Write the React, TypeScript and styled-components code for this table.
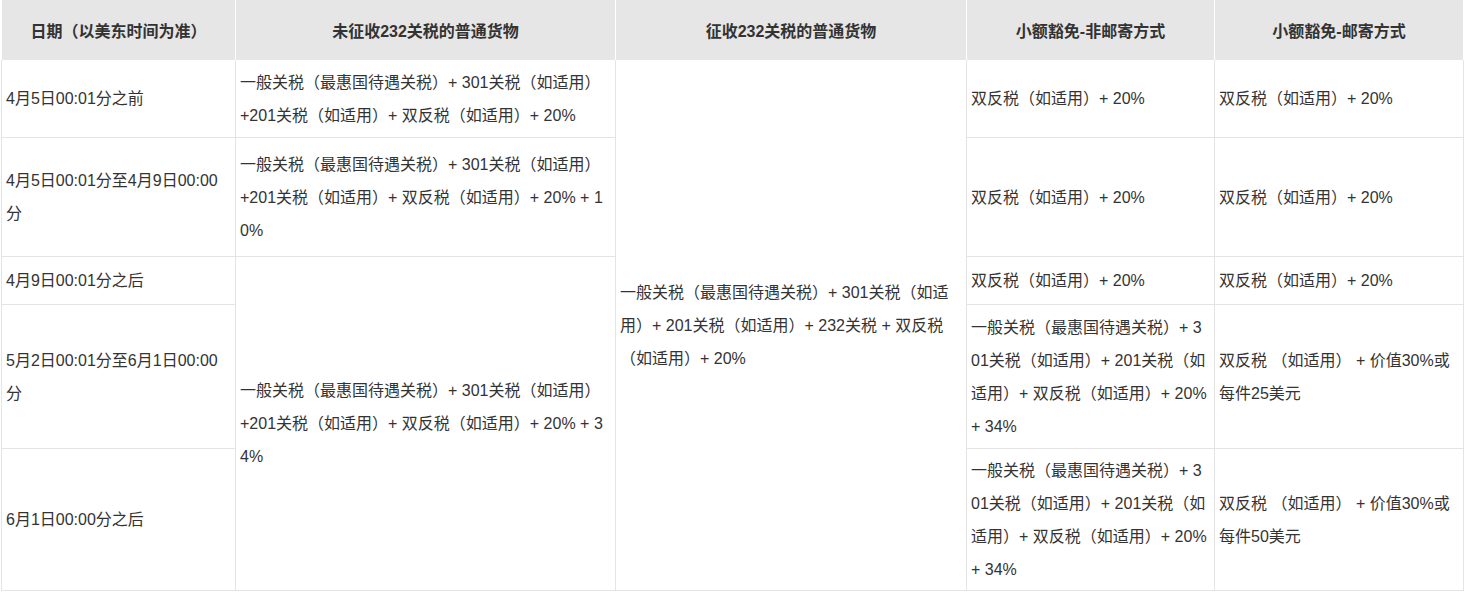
import React from "react";
import styled, { createGlobalStyle } from "styled-components";

const GlobalStyle = createGlobalStyle`
  html, body {
    margin: 0;
    padding: 0;
    background: #ffffff;
  }
  body {
    font-family: "Liberation Sans", "Noto Sans CJK SC", Arial, sans-serif;
  }
`;

const Table = styled.div`
  display: grid;
  margin-left: 1px;
  width: 1463px;
  grid-template-columns: 235px 380px 351px 248px 249px;
  grid-template-rows: 60px 78px 119px 48px 144px 142px;
  font-family: "Liberation Sans", "Noto Sans CJK SC", sans-serif;
`;

const HeadCell = styled.div<{ $first?: boolean }>`
  box-sizing: border-box;
  display: flex;
  align-items: center;
  justify-content: center;
  background: #e6e6e6;
  border-right: 1px solid #ffffff;
  border-left: ${(p) => (p.$first ? "1px solid #ffffff" : "none")};
  color: #333333;
  font-size: 16px;
  font-weight: 700;
  white-space: nowrap;
`;

const Cell = styled.div<{ $col: number; $row: number; $span?: number }>`
  box-sizing: border-box;
  grid-column: ${(p) => p.$col};
  grid-row: ${(p) => p.$row} / span ${(p) => p.$span ?? 1};
  display: flex;
  flex-direction: column;
  justify-content: center;
  padding: 0 4px;
  border-right: 1px solid #e4e4e4;
  border-bottom: 1px solid #e4e4e4;
  border-left: ${(p) => (p.$col === 1 ? "1px solid #e4e4e4" : "none")};
  color: #333333;
  font-size: 16px;
  overflow: hidden;
`;

const Line = styled.div`
  line-height: 33px;
  height: 33px;
  white-space: pre;
`;

type CellData = { col: number; row: number; span?: number; lines: string[] };

const headers = [
  "日期（以美东时间为准）",
  "未征收232关税的普通货物",
  "征收232关税的普通货物",
  "小额豁免-非邮寄方式",
  "小额豁免-邮寄方式",
];

const dual = "双反税（如适用）+ 20%";
const general4 = [
  "一般关税（最惠国待遇关税）+ 3",
  "01关税（如适用）+ 201关税（如",
  "适用）+ 双反税（如适用）+ 20%",
  "+ 34%",
];

const cells: CellData[] = [
  { col: 1, row: 2, lines: ["4月5日00:01分之前"] },
  {
    col: 2,
    row: 2,
    lines: ["一般关税（最惠国待遇关税）+ 301关税（如适用）", "+201关税（如适用）+ 双反税（如适用）+ 20%"],
  },
  {
    col: 3,
    row: 2,
    span: 5,
    lines: [
      "一般关税（最惠国待遇关税）+ 301关税（如适",
      "用）+ 201关税（如适用）+ 232关税 + 双反税",
      "（如适用）+ 20%",
    ],
  },
  { col: 4, row: 2, lines: [dual] },
  { col: 5, row: 2, lines: [dual] },

  { col: 1, row: 3, lines: ["4月5日00:01分至4月9日00:00", "分"] },
  {
    col: 2,
    row: 3,
    lines: [
      "一般关税（最惠国待遇关税）+ 301关税（如适用）",
      "+201关税（如适用）+ 双反税（如适用）+ 20% + 1",
      "0%",
    ],
  },
  { col: 4, row: 3, lines: [dual] },
  { col: 5, row: 3, lines: [dual] },

  { col: 1, row: 4, lines: ["4月9日00:01分之后"] },
  {
    col: 2,
    row: 4,
    span: 3,
    lines: [
      "一般关税（最惠国待遇关税）+ 301关税（如适用）",
      "+201关税（如适用）+ 双反税（如适用）+ 20% + 3",
      "4%",
    ],
  },
  { col: 4, row: 4, lines: [dual] },
  { col: 5, row: 4, lines: [dual] },

  { col: 1, row: 5, lines: ["5月2日00:01分至6月1日00:00", "分"] },
  { col: 4, row: 5, lines: general4 },
  { col: 5, row: 5, lines: ["双反税 （如适用） + 价值30%或", "每件25美元"] },

  { col: 1, row: 6, lines: ["6月1日00:00分之后"] },
  { col: 4, row: 6, lines: general4 },
  { col: 5, row: 6, lines: ["双反税 （如适用） + 价值30%或", "每件50美元"] },
];

export default function App() {
  return (
    <>
      <GlobalStyle />
      <Table>
        {headers.map((h, i) => (
          <HeadCell key={h} $first={i === 0}>
            {h}
          </HeadCell>
        ))}
        {cells.map((c, i) => (
          <Cell key={i} $col={c.col} $row={c.row} $span={c.span}>
            {c.lines.map((l, j) => (
              <Line key={j}>{l}</Line>
            ))}
          </Cell>
        ))}
      </Table>
    </>
  );
}
